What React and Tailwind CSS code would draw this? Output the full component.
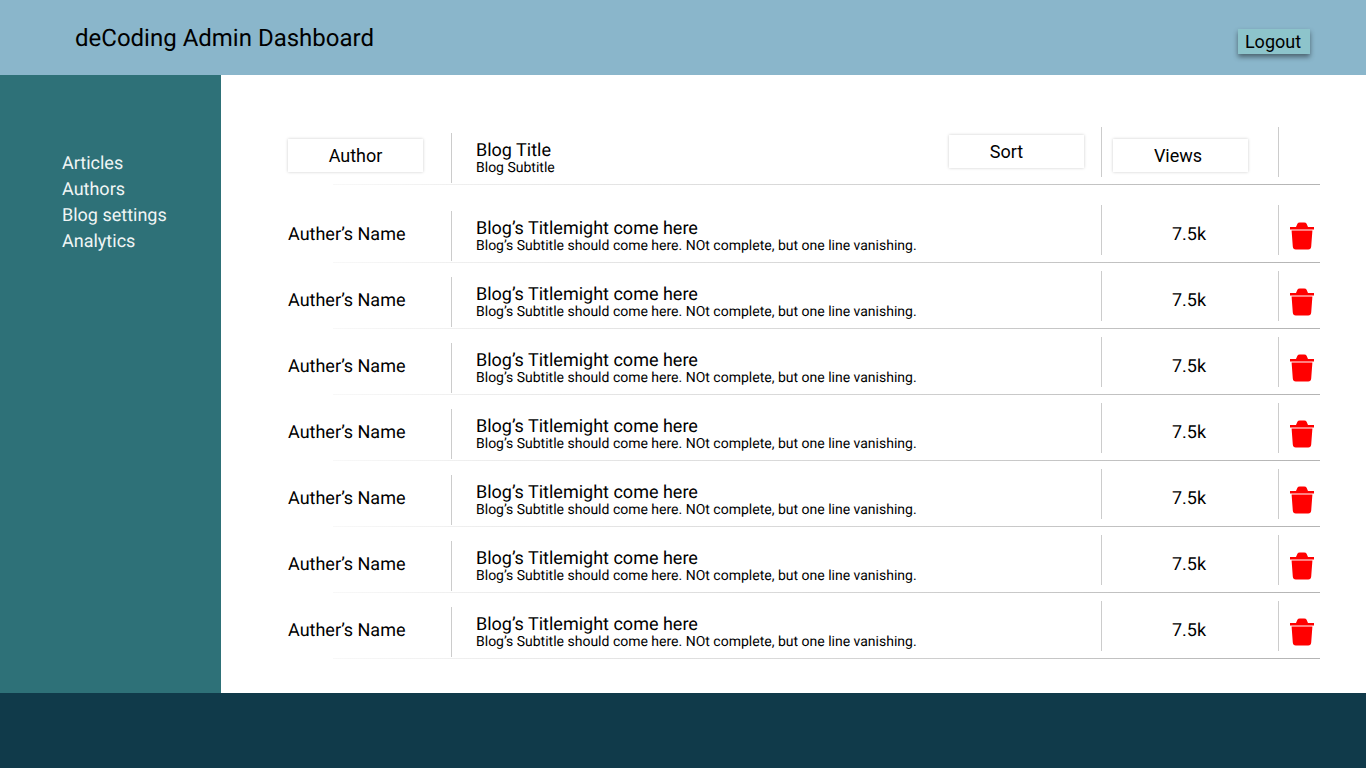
const navItems = ['Articles', 'Authors', 'Blog settings', 'Analytics']
const rows = [1, 2, 3, 4, 5, 6, 7]

function TrashIcon() {
  return (
    <svg width="24" height="28" viewBox="0 0 24 28" className="block">
      <path d="M6 5 L7.4 1.8 Q8 0.4 9.8 0.4 H14.2 Q16 0.4 16.6 1.8 L18 5 H24 V7.6 H0 V5 Z" fill="#ff0000" />
      <path d="M1.6 8.4 H22.4 L21.2 24.5 Q21 27.4 18.2 27.4 H5.8 Q3 27.4 2.8 24.5 Z" fill="#ff0000" />
    </svg>
  )
}

function SortButton({ children, className = '' }) {
  return (
    <button className={`w-[135px] h-[33px] bg-white text-[18px] leading-[33px] text-black shadow-[0_0_3px_rgba(0,0,0,0.2)] ${className}`}>
      {children}
    </button>
  )
}

function Row({ author, title, subtitle, views, head }) {
  return (
    <div>
      <div className="flex h-[57px]">
        <div className="w-[164px] h-[50px] mt-[6px] pb-[5px] flex items-center border-r border-[#cccccc]">
          {author}
        </div>
        <div className="w-[649px] h-[50px] mt-[6px] pl-[24px] pr-[17px] flex items-start justify-between">
          <div className="pt-[8px]">
            <div className="text-[18px] leading-[20px] text-black">{title}</div>
            <div className="text-[14px] leading-[16px] -mt-px text-black">{subtitle}</div>
          </div>
          {head}
        </div>
        <div className="w-[177px] h-[50px] border-l border-[#cccccc]">{views}</div>
        <div className="w-[42px] h-[50px] border-l border-[#cccccc] pl-[11px] pt-[17px]">
          {!head && <TrashIcon />}
        </div>
      </div>
      <div className="ml-[45px] w-[987px] h-px bg-gradient-to-r from-[#f8f8f8] to-[#b4b4b4]" />
    </div>
  )
}

export default function App() {
  return (
    <div className="w-[1366px] h-[768px] flex flex-col overflow-hidden bg-white font-['Roboto',sans-serif] [text-rendering:geometricPrecision]">
      <header className="h-[75px] bg-[#8ab6cb] flex items-center justify-between pl-[75px] pr-[56px]">
        <h1 className="text-[24px] text-black">deCoding Admin Dashboard</h1>
        <button className="mt-[8px] w-[72px] h-[25px] pr-[2px] bg-[#8dc4cb] text-[18px] leading-[25px] text-black shadow-[0_3px_5px_rgba(0,0,0,0.45)]">
          Logout
        </button>
      </header>

      <div className="flex-1 flex">
        <aside className="w-[221px] bg-[#2e7178] pl-[62px] pt-[76px]">
          <ul>
            {navItems.map((item) => (
              <li key={item} className="text-[18px] leading-[26px] text-[#f0f5f5]">{item}</li>
            ))}
          </ul>
        </aside>

        <main className="flex-1 pl-[67px] pt-[52px]">
          <Row
            author={<SortButton>Author</SortButton>}
            title="Blog Title"
            subtitle="Blog Subtitle"
            head={<SortButton className="mt-[2px] pr-[20px]">Sort</SortButton>}
            views={<div className="pl-[11px] pt-[12px]"><SortButton className="pr-[5px]">Views</SortButton></div>}
          />
          <div className="flex flex-col gap-[8px] mt-[20px]">
            {rows.map((row) => (
              <Row
                key={row}
                author={<span className="text-[18px] leading-[27px] pt-[1px] text-black">Auther’s Name</span>}
                title="Blog’s Titlemight come here"
                subtitle="Blog’s Subtitle should come here. NOt complete, but one line vanishing."
                views={<div className="h-full pt-[8px] pr-[2px] flex items-center justify-center text-[18px] text-black">7.5k</div>}
              />
            ))}
          </div>
        </main>
      </div>

      <footer className="h-[75px] bg-[#103a4a]" />
    </div>
  )
}
